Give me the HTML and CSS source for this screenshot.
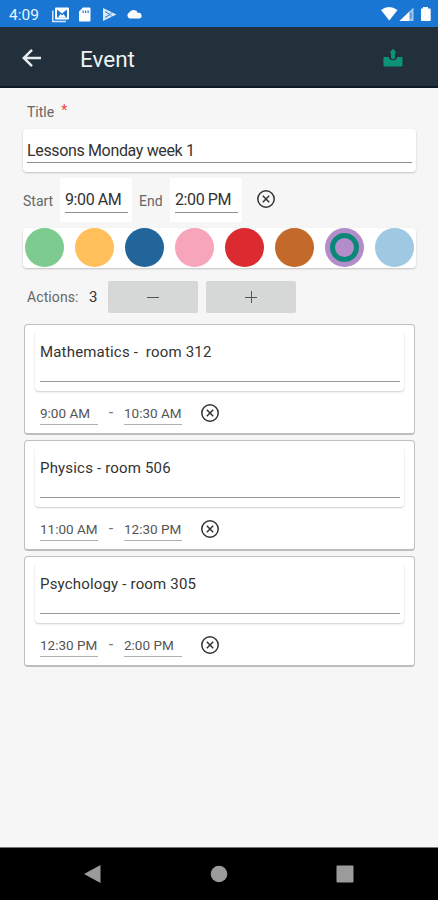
FILE: index.html
```html
<!DOCTYPE html>
<html lang="en">
<head>
    <meta charset="UTF-8">
    <meta name="viewport" content="width=device-width, initial-scale=1.0">
    <title>Event</title>
    <link rel="stylesheet" href="styles.css">
</head>
<body>
    <svg class="defs" width="0" height="0">
        <symbol id="clear-icon" viewBox="0 0 20 20">
            <circle cx="10" cy="10" r="8.2"/>
            <path d="M6.8 6.8l6.4 6.4M13.2 6.8l-6.4 6.4"/>
        </symbol>
    </svg>

    <div class="status-bar">
        <span class="clock">4:09</span>
        <svg class="status-icons" width="92" height="18" viewBox="0 0 92 18">
            <path d="M.8 4.500V15.500H14" fill="none" stroke="#d3e6f8" stroke-width="1.5"/>
            <path fill-rule="evenodd" d="M4 1.500h12q1 0 1 1v10q0 1-1 1H4q-1 0-1-1V2.500q0-1 1-1zM5 3.500v8h10v-8l-5 4z"/>
            <path d="M6 11.500l2.500-3.500 1.500 1.500 1.500-1.500 2.500 3.500z"/>
            <path fill-rule="evenodd" d="M31 1.500h6.500q1 0 1 1v12q0 1-1 1h-9.500q-1 0-1-1V5.500zM30.500 4.500V7h1.200V4.500zM33 4.500V7h1.200V4.500zM35.500 4.500V7h1.200V4.500z"/>
            <path d="M51 2L64.500 8.500 51 15z" opacity=".85"/>
            <path d="M53 5.500l5 3-5 3" fill="none" stroke="#1976d2" stroke-width="1"/>
            <path d="M60.500 6L58 8.500l2.500 2.500" fill="none" stroke="#1976d2" stroke-width=".8"/>
            <path d="M77.500 12.500a3.300 3.300 0 0 1-.3-6A4.900 4.900 0 0 1 86 7a2.800 2.800 0 0 1 1.500 5.500z"/>
        </svg>
        <svg class="status-icons right" width="50" height="18" viewBox="0 0 50 18">
            <path d="M0 4q8-6 16.500 0L8.300 14.500z"/>
            <path d="M18.500 15L32.500 1.500V15z" opacity=".6"/>
            <path d="M18.500 15L28 6v9z"/>
            <path d="M30 6.500v6" stroke="#1976d2" stroke-width="1"/>
            <path d="M40 2.500h2V1h5v1.500h2q.7 0 .7.700v11q0 .8-.7.800h-8q-1 0-1-.8z"/>
        </svg>
    </div>

    <header class="app-bar">
        <svg class="back" width="20" height="20" viewBox="0 0 20 20">
            <path d="M19 10H2.500M10 1.800L1.800 10l8.200 8.200"/>
        </svg>
        <h1>Event</h1>
        <svg class="save" width="20" height="20" viewBox="0 0 20 20">
            <path d="M1 9h4.800q.5 3.300 4.200 3.300T14.200 9H19q.5 0 .5.500v8q0 1-1 1h-17q-1 0-1-1v-8Q.5 9 1 9z"/>
            <path d="M10 .8l3.600 4H12v5q0 1.300-2 1.300t-2-1.300v-5H6.400z"/>
        </svg>
    </header>

    <main class="container">
        <div class="label-row">Title<span class="required">*</span></div>
        <div class="title-card">
            <div class="title-input">Lessons Monday week 1</div>
        </div>

        <div class="period-row">
            <span class="label start">Start</span>
            <div class="time-box"><div class="time">9:00 AM</div></div>
            <span class="label end">End</span>
            <div class="time-box"><div class="time">2:00 PM</div></div>
            <svg class="clear"><use href="#clear-icon"/></svg>
        </div>

        <div class="colors">
            <span class="color green"></span>
            <span class="color yellow"></span>
            <span class="color blue"></span>
            <span class="color pink"></span>
            <span class="color red"></span>
            <span class="color brown"></span>
            <span class="color purple selected"></span>
            <span class="color sky"></span>
        </div>

        <div class="actions-row">
            <span class="label">Actions:</span>
            <span class="count">3</span>
            <button class="step minus" aria-label="Remove action"></button>
            <button class="step plus" aria-label="Add action"></button>
        </div>

        <div class="item">
            <div class="item-card"><div class="item-name">Mathematics -&nbsp; room 312</div></div>
            <div class="item-times">
                <span class="item-time">9:00 AM</span>
                <span class="dash">-</span>
                <span class="item-time">10:30 AM</span>
                <svg class="clear"><use href="#clear-icon"/></svg>
            </div>
        </div>
        <div class="item">
            <div class="item-card"><div class="item-name">Physics - room 506</div></div>
            <div class="item-times">
                <span class="item-time">11:00 AM</span>
                <span class="dash">-</span>
                <span class="item-time">12:30 PM</span>
                <svg class="clear"><use href="#clear-icon"/></svg>
            </div>
        </div>
        <div class="item">
            <div class="item-card"><div class="item-name">Psychology - room 305</div></div>
            <div class="item-times">
                <span class="item-time">12:30 PM</span>
                <span class="dash">-</span>
                <span class="item-time">2:00 PM</span>
                <svg class="clear"><use href="#clear-icon"/></svg>
            </div>
        </div>
    </main>

    <nav class="nav-bar">
        <svg width="18" height="20" viewBox="0 0 18 20"><path d="M0 10L16.500 1v18z"/></svg>
        <svg width="18" height="20" viewBox="0 0 18 20"><circle cx="9" cy="10" r="8.300"/></svg>
        <svg width="18" height="20" viewBox="0 0 18 20"><rect x=".5" y="1.500" width="17" height="17" rx="1"/></svg>
    </nav>
</body>
</html>
```
FILE: styles.css
```css
* {
    box-sizing: border-box;
}
body {
    font-family: Roboto, sans-serif;
    margin: 0;
    height: 900px;
    display: flex;
    flex-direction: column;
    overflow: hidden;
    background-color: #f6f6f6;
    color: #333;
}
.defs {
    display: none;
}
.status-bar {
    height: 27px;
    background: #1976d2;
    display: flex;
    align-items: center;
    padding: 2px 8px 0 9px;
}
.clock {
    width: 43px;
    font-size: 15.5px;
    color: #eaf4ff;
}
.status-icons {
    fill: #fff;
}
.status-icons.right {
    margin-left: auto;
    margin-right: -1px;
}
.app-bar {
    height: 61px;
    background: #21303a;
    border-bottom: 2px solid #0f1b24;
    display: flex;
    align-items: center;
    padding: 2px 35px 0 22px;
}
.app-bar h1 {
    margin: 0 auto 0 38px;
    padding-top: 2px;
    font-size: 22.5px;
    font-weight: 400;
    color: #eef2f5;
}
.back {
    fill: none;
    stroke: #e6ebee;
    stroke-width: 2.5;
}
.save {
    fill: #0c9276;
}
.container {
    flex: 1;
    padding: 0 22px 0 23px;
}
.label-row, .label {
    font-size: 14px;
    color: #666;
}
.label-row {
    height: 41px;
    padding: 16px 0 0 4px;
    line-height: 17px;
}
.required {
    color: #f44336;
    margin-left: 7px;
    position: relative;
    top: -2px;
}
.title-card, .colors {
    background: #fff;
    border-radius: 4px;
    box-shadow: 0 1px 2px rgba(0, 0, 0, 0.22);
}
.title-card {
    height: 43px;
    padding: 9px 4px 0;
}
.title-input {
    height: 25px;
    border-bottom: 1px solid #8e8e8e;
    font-size: 16px;
    line-height: 26px;
    letter-spacing: -0.35px;
}
.period-row {
    display: flex;
    height: 44px;
    margin-top: 6px;
    align-items: center;
}
.label.start {
    width: 37px;
    padding-top: 1px;
}
.label.end {
    width: 38px;
    padding: 1px 0 0 7px;
}
.time-box {
    width: 72px;
    height: 44px;
    padding: 9px 4px 0 5px;
    background: #fff;
}
.time {
    height: 26px;
    border-bottom: 1px solid #8e8e8e;
    font-size: 16px;
    line-height: 26px;
    letter-spacing: -0.4px;
    white-space: nowrap;
}
.clear {
    width: 20px;
    height: 20px;
    fill: none;
    stroke: #333;
    stroke-width: 1.5;
}
.period-row .clear {
    margin: 0 0 3px 14px;
}
.colors {
    height: 40px;
    margin-top: 6px;
    padding: 0 2px;
    display: flex;
    justify-content: space-between;
}
.color {
    width: 39px;
    height: 39px;
    border-radius: 50%;
}
.green { background: #7dcb8f; }
.yellow { background: #ffc05c; }
.blue { background: #21659b; }
.pink { background: #f6a5ba; }
.red { background: #db2b30; }
.brown { background: #c36a2b; }
.purple { background: #b38cc9; }
.sky { background: #9fc9e2; }
.selected {
    padding: 5px;
}
.selected::before {
    content: "";
    display: block;
    box-sizing: border-box;
    width: 29px;
    height: 29px;
    border: 5px solid #098878;
    border-radius: 50%;
}
.actions-row {
    display: flex;
    align-items: center;
    height: 32px;
    margin: 13px 0 11px;
    padding-left: 4px;
}
.actions-row .label {
    width: 62px;
    letter-spacing: 0.1px;
}
.count {
    width: 19px;
    font-size: 15px;
}
.step {
    width: 90px;
    height: 32px;
    margin-right: 8px;
    padding: 0;
    border: none;
    border-radius: 2px;
    background:
        linear-gradient(#555, #555) center / 12px 1px no-repeat,
        #d6d7d7;
}
.step.plus {
    background:
        linear-gradient(#555, #555) center / 12px 1px no-repeat,
        linear-gradient(#555, #555) center / 1px 12px no-repeat,
        #d6d7d7;
}
.item {
    height: 111px;
    margin: 0 1px 5px;
    padding: 6px 10px 0;
    background: #fff;
    border: 1px solid #c0c0c0;
    border-bottom: 2px solid #bdbdbd;
    border-radius: 4px;
}
.item-card {
    height: 60px;
    padding: 9px 4px 0 5px;
    border-radius: 4px;
    box-shadow: 0 1px 2px rgba(0, 0, 0, 0.2);
}
.item-name {
    height: 42px;
    border-bottom: 1px solid #999;
    font-size: 15px;
    line-height: 24px;
    letter-spacing: 0.18px;
}
.item-times {
    display: flex;
    height: 34px;
    padding: 12px 5px 0;
}
.item-time {
    width: 58px;
    height: 22px;
    border-bottom: 1px solid #b0b0b0;
    font-size: 13.5px;
    line-height: 21px;
    color: #555;
    white-space: nowrap;
}
.dash {
    width: 26px;
    text-align: center;
    line-height: 20px;
    color: #777;
}
.item-times .clear {
    margin-left: 18px;
}
.nav-bar {
    height: 53px;
    background: #000;
    border-top: 1px solid #777;
    display: flex;
    justify-content: space-between;
    align-items: center;
    padding: 0 84px;
}
.nav-bar svg {
    fill: #9b9b9b;
}
```
